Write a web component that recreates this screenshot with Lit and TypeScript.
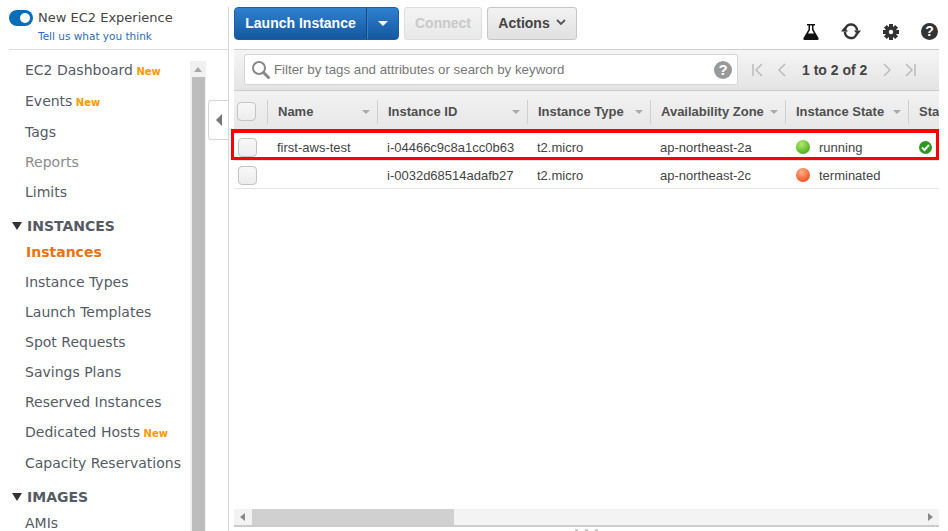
import { LitElement, html, css, svg } from "lit";
import { customElement } from "lit/decorators.js";

const caret = html`<svg class="caret" width="8" height="4" viewBox="0 0 8 4"><path d="M0 0h8L4 4z" fill="#a9a9a9"/></svg>`;

@customElement("app-root")
export class AppRoot extends LitElement {
  static styles = css`
    :host { display: block; width: 948px; height: 531px; overflow: hidden; background: #fff; position: relative; font-family: "Liberation Sans", Arial, sans-serif; color: #444; }
    .root { display: flex; height: 531px; }
    .side { width: 228px; flex: none; display: flex; flex-direction: column; font-family: "DejaVu Sans", sans-serif; overflow: hidden; }
    .exp { margin: 0 0 0 9px; width: 219px; border-bottom: 1px solid #ddd; display: flex; gap: 5px; padding-top: 9px; height: 40px; }
    .toggle { width: 24px; height: 16px; border-radius: 8px; background: #0b6cb8; position: relative; flex: none; margin-top: 1px; }
    .toggle::after { content: ""; position: absolute; right: 3px; top: 3px; width: 10px; height: 10px; border-radius: 50%; background: #fff; }
    .exp-t { font-size: 13px; color: #444; line-height: 18px; }
    .exp-l { font-size: 10.5px; color: #2b6cb8; line-height: 16px; margin-top: 1px; }
    .nav { display: flex; flex: 1; min-height: 0; }
    .items { width: 190px; flex: none; padding: 5px 0 0 25px; box-sizing: border-box; font-size: 14px; color: #545b64; white-space: nowrap; }
    .it { height: 30px; line-height: 30px; }
    .it.t { height: 31px; }
    .it.dim { color: #8a8a8a; }
    .it.act { color: #ec7211; font-weight: 700; height: 28px; line-height: 26px; padding-left: 1px; }
    .it.last { line-height: 26px; }
    .new { color: #f90; font-weight: 700; font-size: 10px; margin-left: -1px; }
    .h { display: flex; align-items: center; gap: 5px; margin-left: -13px; font-weight: 700; font-size: 14px; color: #545b64; height: 26px; margin-top: 6px; line-height: 26px; }
    .h i { width: 0; height: 0; border: 5px solid transparent; border-top: 8px solid #333; border-bottom: 0; }
    .sb { width: 16px; background: #f1f1f1; margin-top: 11px; display: flex; flex-direction: column; align-items: center; flex: none; }
    .sb b { width: 0; height: 0; border: 4px solid transparent; border-top: 0; border-bottom: 5px solid #a8a8a8; margin: 6px 0 5px; }
    .sb u { width: 13px; flex: 1; background: #bdbdbd; display: block; }
    .main { flex: 1; min-width: 0; margin-top: 7px; border-left: 1px solid #d5d5d5; padding: 0 9px 0 5px; display: flex; flex-direction: column; overflow: hidden; }
    .tb { flex: none; display: flex; align-items: flex-start; box-sizing: border-box; border-bottom: 1px solid #ccc; height: 43px; gap: 5px; }
    .btn { height: 33px; box-sizing: border-box; border-radius: 3px; font-weight: 700; font-size: 14px; display: flex; align-items: center; justify-content: center; padding-bottom: 2px; }
    .primary { display: flex; height: 33px; border-radius: 4px; overflow: hidden; color: #fff; background: linear-gradient(#2f80d0, #14589f); border: 1px solid #1a5ea5; box-sizing: border-box; font-weight: 700; font-size: 14px; }
    .primary span { width: 132px; box-sizing: border-box; display: flex; align-items: center; justify-content: center; border-right: 1px solid #12497f; padding-bottom: 2px; }
    .primary em { width: 31px; box-sizing: border-box; display: flex; align-items: center; justify-content: center; border-left: 1px solid #3b80c6; }
    .primary em::after { content: ""; border: 5px solid transparent; border-top: 5px solid #fff; border-bottom: 0; }
    .connect { width: 78px; color: #c9c9c9; background: linear-gradient(#f4f4f4, #e8e8e8); border: 1px solid #ddd; }
    .actions { width: 90px; color: #444; background: linear-gradient(#f2f2f2, #e0e0e0); border: 1px solid #c6c6c6; gap: 6px; }
    .actions svg { margin-top: -2px; }
    .spacer { flex: 1; }
    .tools { display: flex; gap: 22px; align-items: center; padding-top: 16px; margin-right: 1px; }
    .tools .fl { margin-right: 0; margin-left: -1px; }
    .filter { height: 41px; flex: none; background: linear-gradient(#f5f5f5, #e4e4e4); border-bottom: 1px solid #ccc; display: flex; align-items: center; padding: 0 0 1px 10px; box-sizing: border-box; }
    .search { width: 494px; height: 31px; box-sizing: border-box; background: #fff; border: 1px solid #d5d5d5; border-radius: 3px; display: flex; align-items: center; padding: 0 5px 0 6px; gap: 3px; font-size: 13.3px; color: #777; white-space: nowrap; }
    .search .ph { flex: 1; }
    .pager { display: flex; align-items: center; margin-left: 14px; font-weight: 700; font-size: 14px; color: #444; }
    .pager .a { margin-right: 15px; }
    .pager .b { margin-right: 16px; }
    .pager .c { margin-right: 16px; }
    .pager .d { margin-right: 14px; }
    .table { display: flex; flex-direction: column; flex: 1; min-height: 0; font-size: 13px; overflow: hidden; }
    .row { display: grid; grid-template-columns: 33px 110px 150px 123px 135px 123px 100px; width: 774px; }
    .head { height: 42px; padding-bottom: 1px; box-sizing: border-box; background: linear-gradient(#f2f2f2, #e6e6e6); font-weight: 700; font-size: 13px; color: #4f4f4f; align-items: center; flex: none; white-space: nowrap; }
    .head > div { display: flex; align-items: center; justify-content: space-between; border-left: 1px solid #d0d0d0; height: 24px; padding: 0 7px 0 10px; box-sizing: border-box; }
    .head > div.cb { border: 0; padding: 0 0 0 3px; }
    .body { height: 28px; padding-top: 1px; align-items: center; border-bottom: 1px solid #e4e4e4; box-sizing: border-box; color: #444; white-space: nowrap; flex: none; }
    .body > div { padding-left: 10px; display: flex; align-items: center; gap: 9px; }
    .body > div.st { padding-left: 11px; }
    .body > div.cb { padding: 0 0 0 4px; }
    .check { width: 19px; height: 19px; box-sizing: border-box; border: 1px solid #c4c4c4; border-radius: 4px; background: linear-gradient(#f8f8f8, #ececec); }
    .dot { width: 14px; height: 14px; border-radius: 50%; flex: none; }
    .g { background: radial-gradient(circle at 40% 30%, #b5ea70, #55b51f 70%, #3e9a14); }
    .r { background: radial-gradient(circle at 40% 30%, #ffb088, #f2592c 70%, #d9431e); }
    .fill { flex: 1; }
    .hscroll { height: 16px; flex: none; background: #f3f3f3; display: flex; align-items: center; padding: 0 6px; gap: 7px; border-bottom: 2px solid #ccc; }
    .hscroll i { width: 0; height: 0; border: 4px solid transparent; border-left: 0; border-right: 5px solid #8a8a8a; }
    .hscroll i.rt { border-right: 0; border-left: 5px solid #8a8a8a; }
    .hscroll u { width: 202px; height: 16px; background: #d0d0d0; display: block; }
    .grip { height: 4px; flex: none; display: flex; justify-content: center; align-items: flex-end; gap: 7px; }
    .grip i { width: 3px; height: 2px; background: #ccc; }
    .collapse { position: absolute; left: 208px; top: 100px; width: 20px; height: 40px; box-sizing: border-box; background: #fff; border: 1px solid #d5d5d5; border-right: 0; border-radius: 4px 0 0 4px; display: flex; align-items: center; justify-content: center; }
    .collapse::after { content: ""; border: 6px solid transparent; border-left: 0; border-right: 6px solid #777; }
    .mark { position: absolute; left: 231px; top: 129px; width: 708px; height: 31px; box-sizing: border-box; border: 3px solid #f00; border-top-width: 4px; pointer-events: none; }
    .q { display: inline-block; border-radius: 50%; color: #fff; font-weight: 700; text-align: center; font-family: "Liberation Sans", sans-serif; flex: none; }
    .q.dark { width: 17px; height: 17px; background: #333; font-size: 14px; line-height: 17px; }
    .q.grey { width: 18px; height: 18px; background: #999; font-size: 15px; line-height: 18px; }
  `;

  icons = {
    flask: svg`<path d="M4 0h8v1.500h-1.500v4l5 8.500c.4 1 0 2-1 2h-13c-1 0-1.400-1-1-2l5-8.500v-4H4z" fill="#111"/><path d="M7 1.500h2v4.500l2 3.500H5l2-3.500z" fill="#fff"/>`,
    refresh: svg`<path d="M4.200 6A6 6 0 0 1 16 7.500" fill="none" stroke="#333" stroke-width="2.500"/><path d="M13 7.500h7L16.500 12z" fill="#333"/><path d="M15.800 10.500A6 6 0 0 1 4 8.500" fill="none" stroke="#333" stroke-width="2.500"/><path d="M0 8.500h7L3.500 4z" fill="#333"/>`,
    gear: svg`<g fill="#333"><circle cx="8" cy="8" r="5.800"/><rect x="6" y="0" width="4" height="16"/><rect x="0" y="6" width="16" height="4"/><rect x="6" y="0" width="4" height="16" transform="rotate(45 8 8)"/><rect x="0" y="6" width="16" height="4" transform="rotate(45 8 8)"/></g><circle cx="8" cy="8" r="2.200" fill="#fff"/>`,
  };

  render() {
    const n = html`<span class="new">New</span>`;
    return html`
      <div class="root">
        <aside class="side">
          <div class="exp">
            <div class="toggle"></div>
            <div>
              <div class="exp-t">New EC2 Experience</div>
              <div class="exp-l">Tell us what you think</div>
            </div>
          </div>
          <div class="nav">
            <div class="items">
              <div class="it t">EC2 Dashboard ${n}</div>
              <div class="it t">Events ${n}</div>
              <div class="it">Tags</div>
              <div class="it dim">Reports</div>
              <div class="it">Limits</div>
              <div class="h"><i></i>INSTANCES</div>
              <div class="it act">Instances</div>
              <div class="it">Instance Types</div>
              <div class="it">Launch Templates</div>
              <div class="it">Spot Requests</div>
              <div class="it">Savings Plans</div>
              <div class="it">Reserved Instances</div>
              <div class="it t">Dedicated Hosts ${n}</div>
              <div class="it">Capacity Reservations</div>
              <div class="h"><i></i>IMAGES</div>
              <div class="it last">AMIs</div>
            </div>
            <div class="sb"><b></b><u></u></div>
          </div>
        </aside>
        <main class="main">
          <div class="tb">
            <div class="primary"><span>Launch Instance</span><em></em></div>
            <div class="btn connect">Connect</div>
            <div class="btn actions">Actions
              <svg width="10" height="6" viewBox="0 0 10 6"><path d="M1 1l4 4 4-4" fill="none" stroke="#555" stroke-width="1.800"/></svg>
            </div>
            <div class="spacer"></div>
            <div class="tools">
              <svg class="fl" width="16" height="16" viewBox="0 0 16 16">${this.icons.flask}</svg>
              <svg width="20" height="17" viewBox="0 0 20 17">${this.icons.refresh}</svg>
              <svg width="16" height="16" viewBox="0 0 16 16">${this.icons.gear}</svg>
              <span class="q dark">?</span>
            </div>
          </div>
          <div class="filter">
            <div class="search">
              <svg width="20" height="20" viewBox="0 0 20 20"><circle cx="8" cy="8" r="6" fill="none" stroke="#888" stroke-width="2"/><path d="M12.500 12.500l5 5" stroke="#888" stroke-width="3" stroke-linecap="round"/></svg>
              <span class="ph">Filter by tags and attributes or search by keyword</span>
              <span class="q grey">?</span>
            </div>
            <div class="pager">
              <svg class="a" width="11" height="14" viewBox="0 0 11 14"><path d="M1 1v12M10 1L4 7l6 6" fill="none" stroke="#bbb" stroke-width="1.500"/></svg>
              <svg class="b" width="8" height="14" viewBox="0 0 8 14"><path d="M7 1L1 7l6 6" fill="none" stroke="#bbb" stroke-width="1.500"/></svg>
              <span class="c">1 to 2 of 2</span>
              <svg class="d" width="8" height="14" viewBox="0 0 8 14"><path d="M1 1l6 6-6 6" fill="none" stroke="#bbb" stroke-width="1.500"/></svg>
              <svg width="11" height="14" viewBox="0 0 11 14"><path d="M10 1v12M1 1l6 6-6 6" fill="none" stroke="#bbb" stroke-width="1.500"/></svg>
            </div>
          </div>
          <div class="table">
            <div class="row head">
              <div class="cb"><div class="check"></div></div>
              <div>Name ${caret}</div>
              <div>Instance ID ${caret}</div>
              <div>Instance Type ${caret}</div>
              <div>Availability Zone ${caret}</div>
              <div>Instance State ${caret}</div>
              <div>Status Checks</div>
            </div>
            <div class="row body">
              <div class="cb"><div class="check"></div></div>
              <div>first-aws-test</div>
              <div>i-04466c9c8a1cc0b63</div>
              <div>t2.micro</div>
              <div>ap-northeast-2a</div>
              <div class="st"><span class="dot g"></span>running</div>
              <div class="st"><svg width="13" height="13" viewBox="0 0 13 13"><circle cx="6.500" cy="6.500" r="6.500" fill="#2b9a1c"/><path d="M3 6.500l2.500 2.500 4.500-5" fill="none" stroke="#fff" stroke-width="2"/></svg></div>
            </div>
            <div class="row body">
              <div class="cb"><div class="check"></div></div>
              <div></div>
              <div>i-0032d68514adafb27</div>
              <div>t2.micro</div>
              <div>ap-northeast-2c</div>
              <div class="st"><span class="dot r"></span>terminated</div>
              <div></div>
            </div>
            <div class="fill"></div>
            <div class="hscroll"><i></i><u></u><span class="fill"></span><i class="rt"></i></div>
            <div class="grip"><i></i><i></i><i></i></div>
          </div>
        </main>
      </div>
      <div class="collapse"></div>
      <div class="mark"></div>
    `;
  }
}
